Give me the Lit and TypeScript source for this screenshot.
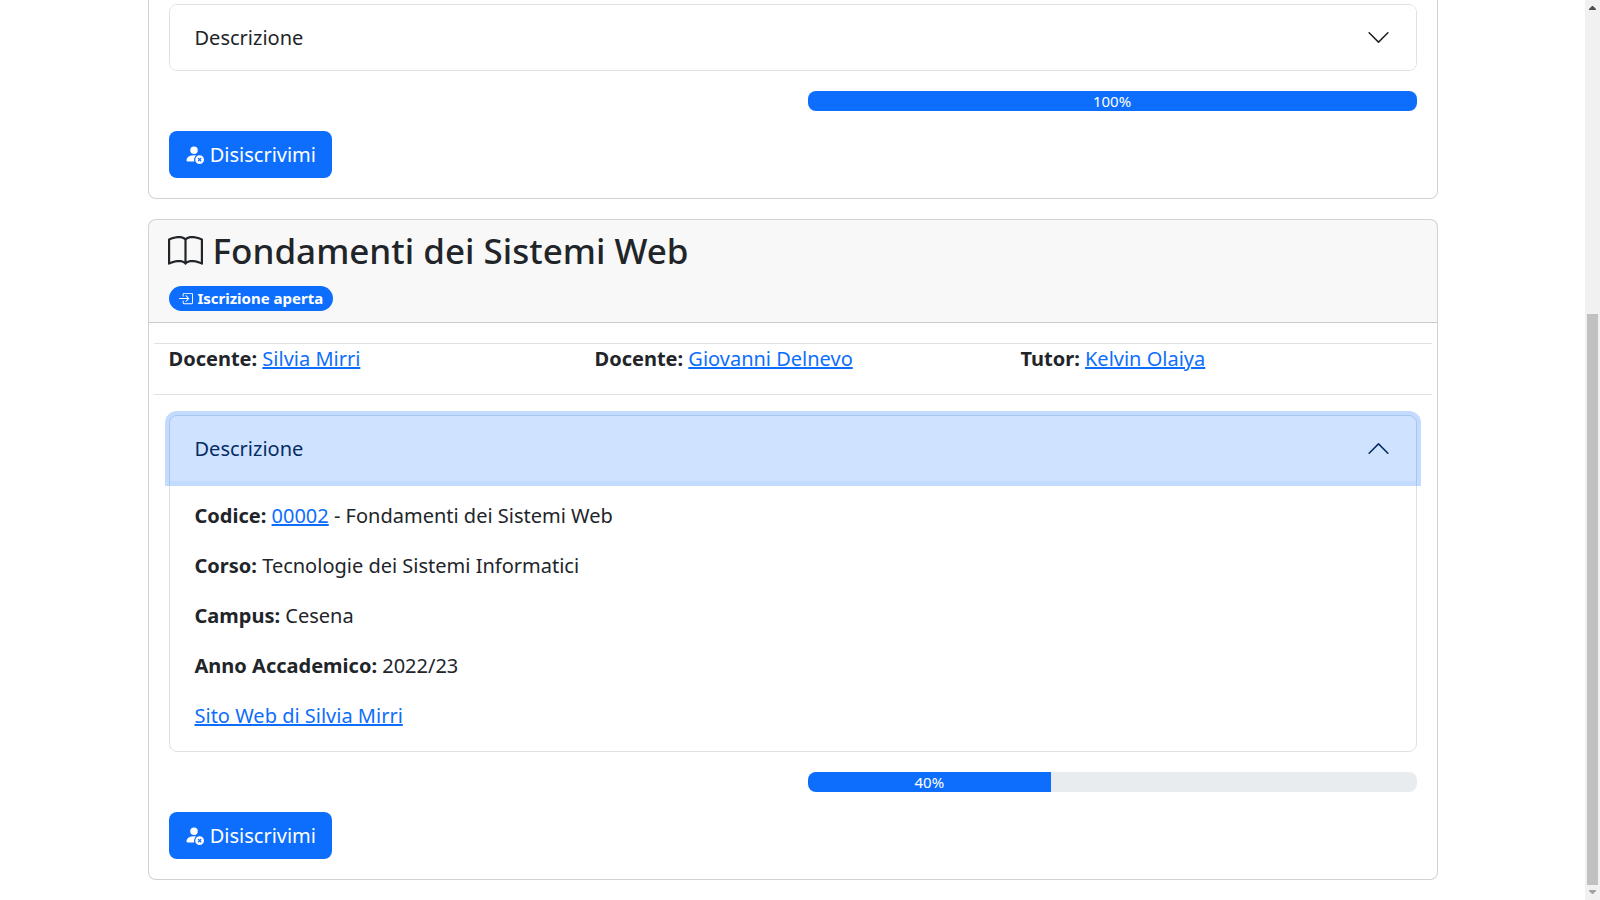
import { LitElement, html, css, svg, nothing } from "lit";
import { customElement, property, state } from "lit/decorators.js";
import { classMap } from "lit/directives/class-map.js";
import { styleMap } from "lit/directives/style-map.js";

interface Person {
  role: string;
  name: string;
}

interface Course {
  title: string;
  badge: string;
  people: Person[];
  code: string;
  degree: string;
  campus: string;
  year: string;
  site: string;
  progress: number;
  open: boolean;
  headless: boolean;
}

const courses: Course[] = [
  {
    title: "", badge: "", people: [], code: "", degree: "", campus: "", year: "", site: "",
    progress: 100,
    open: false,
    headless: true,
  },
  {
    title: "Fondamenti dei Sistemi Web",
    badge: "Iscrizione aperta",
    people: [
      { role: "Docente:", name: "Silvia Mirri" },
      { role: "Docente:", name: "Giovanni Delnevo" },
      { role: "Tutor:", name: "Kelvin Olaiya" },
    ],
    code: "00002",
    degree: "Tecnologie dei Sistemi Informatici",
    campus: "Cesena",
    year: "2022/23",
    site: "Sito Web di Silvia Mirri",
    progress: 40,
    open: true,
    headless: false,
  },
];

const icon = (content: unknown) => html`<svg class="icon" viewBox="0 0 16 16" fill="currentColor" aria-hidden="true">${content}</svg>`;

const book = svg`<path d="M1 2.828c.885-.37 2.154-.769 3.388-.893 1.33-.134 2.458.063 3.112.752v9.746c-.935-.53-2.12-.603-3.213-.493-1.18.12-2.37.461-3.287.811V2.828zm7.5-.141c.654-.689 1.782-.886 3.112-.752 1.234.124 2.503.523 3.388.893v9.923c-.918-.35-2.107-.692-3.287-.81-1.094-.111-2.278-.039-3.213.492V2.687zM8 1.783C7.015.936 5.587.81 4.287.94c-1.514.153-3.042.672-3.994 1.105A.5.5 0 0 0 0 2.5v11a.5.5 0 0 0 .707.455c.882-.4 2.303-.881 3.68-1.02 1.409-.142 2.59.087 3.223.877a.5.5 0 0 0 .78 0c.633-.79 1.814-1.019 3.222-.877 1.378.139 2.8.62 3.681 1.02A.5.5 0 0 0 16 13.5v-11a.5.5 0 0 0-.293-.455c-.952-.433-2.48-.952-3.994-1.105C10.413.809 8.985.936 8 1.783z"/>`;

const enter = svg`<path fill-rule="evenodd" d="M6 3.5a.5.5 0 0 1 .5-.5h8a.5.5 0 0 1 .5.5v9a.5.5 0 0 1-.5.5h-8a.5.5 0 0 1-.5-.5v-2a.5.5 0 0 0-1 0v2A1.5 1.5 0 0 0 6.5 14h8a1.5 1.5 0 0 0 1.5-1.5v-9A1.5 1.5 0 0 0 14.5 2h-8A1.5 1.5 0 0 0 5 3.5v2a.5.5 0 0 0 1 0v-2z"/><path fill-rule="evenodd" d="M11.854 8.354a.5.5 0 0 0 0-.708l-3-3a.5.5 0 1 0-.708.708L10.293 7.5H1.5a.5.5 0 0 0 0 1h8.793l-2.147 2.146a.5.5 0 0 0 .708.708l3-3z"/>`;

const personX = svg`<path d="M11 5a3 3 0 1 1-6 0 3 3 0 0 1 6 0Zm-9 8c0 1 1 1 1 1h5.256A4.493 4.493 0 0 1 8 12.5a4.49 4.49 0 0 1 1.544-3.393C9.077 9.038 8.564 9 8 9c-5 0-6 3-6 4Z"/><path d="M12.5 16a3.5 3.5 0 1 0 0-7 3.5 3.5 0 0 0 0 7Zm-.646-4.854.646.647.646-.647a.5.5 0 0 1 .708.708l-.647.646.647.646a.5.5 0 0 1-.708.708l-.646-.647-.646.647a.5.5 0 0 1-.708-.708l.647-.646-.647-.646a.5.5 0 0 1 .708-.708Z"/>`;

@customElement("course-card")
class CourseCard extends LitElement {
  @property({ attribute: false }) course!: Course;
  @state() private open = false;

  static styles = css`
    :host { display: block; }
    * { box-sizing: border-box; }
    .card { background: #fff; border: 1px solid rgba(0, 0, 0, 0.175); border-radius: 8px; }
    .headless { border-top: 0; border-radius: 0 0 8px 8px; }
    .header {
      padding: 10px 20px;
      background: rgba(33, 37, 41, 0.03);
      border-bottom: 1px solid rgba(0, 0, 0, 0.175);
      border-radius: 7px 7px 0 0;
    }
    .icon { width: 1em; height: 1em; margin: 0 1px 0 -1px; vertical-align: -2px; }
    .title { margin: 0 0 10px; font-size: 35px; line-height: 42px; font-weight: 500; }
    .title .icon { vertical-align: -5px; }
    .badge-row { display: flex; align-items: flex-end; height: 30px; padding-bottom: 1px; }
    .badge {
      padding: 5px 10px;
      border-radius: 50px;
      background: #0d6efd;
      color: #fff;
      font-size: 15px;
      line-height: 15px;
      font-weight: 700;
    }
    .body { padding: 20px; }
    .headless .body { padding-top: 4px; }
    .people {
      display: grid;
      grid-template-columns: repeat(3, 1fr);
      margin: 0 -15px 20px;
      border: solid #dee2e6;
      border-width: 1px 0;
    }
    .person { margin: 0 15px 20px; }
    .label { font-weight: 700; }
    a { color: #0d6efd; text-decoration: underline; }
    .accordion { border: 1px solid #dee2e6; border-radius: 8px; }
    .heading { margin: 0; font-size: 20px; font-weight: 400; line-height: 25px; }
    .toggle {
      display: flex;
      align-items: center;
      justify-content: space-between;
      width: 100%;
      padding: 20px 25px;
      border: 0;
      border-radius: 7px;
      background: #fff;
      color: #212529;
      font: inherit;
      text-align: left;
      cursor: pointer;
    }
    .toggle.open {
      border-radius: 7px 7px 0 0;
      background: #cfe2ff;
      color: #052c65;
      outline: 0;
      box-shadow: 0 0 0 5px rgba(13, 110, 253, 0.25);
    }
    .chevron { width: 25px; height: 25px; }
    .open .chevron { transform: rotate(180deg); }
    .details { display: grid; gap: 20px; padding: 20px 25px; }
    .details p { margin: 0; }
    .progress-row { display: grid; grid-template-columns: 1fr 1fr; column-gap: 30px; margin: 20px 0; }
    .progress { grid-column: 2; height: 20px; border-radius: 8px; background: #e9ecef; overflow: hidden; }
    .bar { height: 100%; background: #0d6efd; color: #fff; font-size: 15px; line-height: 20px; text-align: center; }
    .leave {
      display: block;
      padding: 8px 16px;
      border: 0;
      border-radius: 8px;
      background: #0d6efd;
      color: #fff;
      font: inherit;
      line-height: 31px;
      cursor: pointer;
    }
  `;

  willUpdate(changed: Map<string, unknown>) {
    if (changed.has("course")) this.open = this.course.open;
  }

  private renderHeader(c: Course) {
    return html`<header class="header">
      <h2 class="title">${icon(book)} ${c.title}</h2>
      <div class="badge-row"><span class="badge">${icon(enter)} ${c.badge}</span></div>
    </header>`;
  }

  private renderPeople(c: Course) {
    return html`<div class="people">
      ${c.people.map((p) => html`<p class="person"><span class="label">${p.role}</span> <a href="#">${p.name}</a></p>`)}
    </div>`;
  }

  private renderDetails(c: Course) {
    return html`<div class="details" id="details">
      <p><span class="label">Codice:</span> <a href="#">${c.code}</a> - ${c.title}</p>
      <p><span class="label">Corso:</span> ${c.degree}</p>
      <p><span class="label">Campus:</span> ${c.campus}</p>
      <p><span class="label">Anno Accademico:</span> ${c.year}</p>
      <p><a href="#">${c.site}</a></p>
    </div>`;
  }

  render() {
    const c = this.course;
    return html`<article class=${classMap({ card: true, headless: c.headless })}>
      ${c.headless ? nothing : this.renderHeader(c)}
      <div class="body">
        ${c.people.length ? this.renderPeople(c) : nothing}
        <div class="accordion">
          <h3 class="heading">
            <button
              type="button"
              class=${classMap({ toggle: true, open: this.open })}
              aria-expanded=${this.open ? "true" : "false"}
              @click=${() => (this.open = !this.open)}
            >
              Descrizione
              <svg class="chevron" viewBox="0 0 16 16" fill="currentColor" aria-hidden="true">
                <path fill-rule="evenodd" d="M1.646 4.646a.5.5 0 0 1 .708 0L8 10.293l5.646-5.647a.5.5 0 0 1 .708.708l-6 6a.5.5 0 0 1-.708 0l-6-6a.5.5 0 0 1 0-.708z" />
              </svg>
            </button>
          </h3>
          ${this.open && c.code ? this.renderDetails(c) : nothing}
        </div>
        <div class="progress-row">
          <div class="progress" role="progressbar" aria-valuenow=${c.progress} aria-valuemin="0" aria-valuemax="100">
            <div class="bar" style=${styleMap({ width: `${c.progress}%` })}>${c.progress}%</div>
          </div>
        </div>
        <button type="button" class="leave">${icon(personX)} Disiscrivimi</button>
      </div>
    </article>`;
  }
}

@customElement("scroll-track")
class ScrollTrack extends LitElement {
  static styles = css`
    :host {
      position: sticky;
      top: 0;
      display: flex;
      flex-direction: column;
      flex: none;
      width: 15px;
      height: 100vh;
      background: #f1f1f1;
    }
    .arrow { flex: none; width: 15px; height: 15px; }
    .up { fill: #505050; }
    .down { fill: #a3a3a3; }
    .rail { display: grid; flex: 1; grid-template-rows: 299fr 571fr; padding: 0 2px; }
    .thumb { grid-row: 2; background: #c1c1c1; }
  `;

  render() {
    return html`
      <svg class="arrow up" viewBox="0 0 15 15" aria-hidden="true"><path d="M4 10V9L7 6h1l3 3v1z" /></svg>
      <div class="rail"><div class="thumb"></div></div>
      <svg class="arrow down" viewBox="0 0 15 15" aria-hidden="true"><path d="M4 5h7v1L8 9H7L4 6z" /></svg>
    `;
  }
}

@customElement("app-root")
class AppRoot extends LitElement {
  static styles = css`
    :host {
      display: flex;
      align-items: flex-start;
      min-height: 100vh;
      background: #fff;
      color: #212529;
      font-family: "Noto Sans", "Liberation Sans", sans-serif;
      font-size: 20px;
      line-height: 30px;
    }
    .page { flex: 1; min-width: 0; padding: 0 15px; }
    .list { display: grid; gap: 20px; max-width: 1290px; margin: 0 auto; }
  `;

  render() {
    return html`
      <main class="page">
        <div class="list">${courses.map((c) => html`<course-card .course=${c}></course-card>`)}</div>
      </main>
      <scroll-track></scroll-track>
    `;
  }
}
